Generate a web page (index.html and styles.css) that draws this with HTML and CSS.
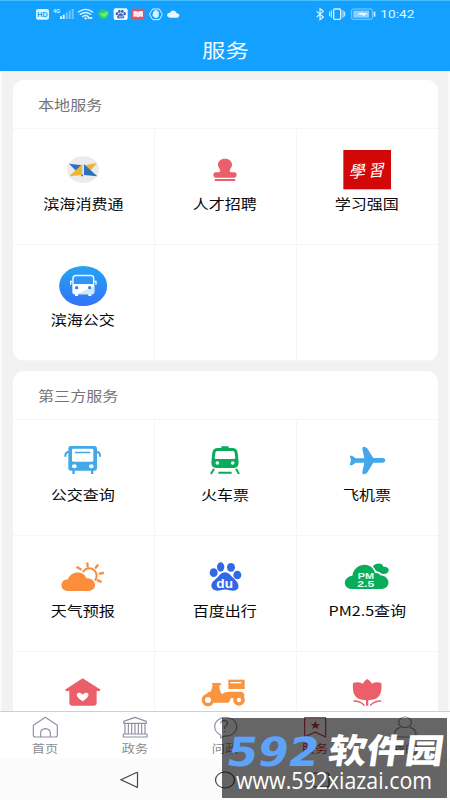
FILE: index.html
```html
<!DOCTYPE html>
<html lang="zh-CN">
<head>
<meta charset="utf-8">
<title>服务</title>
<link rel="stylesheet" href="styles.css">
</head>
<body>
<div class="phone">
  <header class="header">
    <div class="status">
      <svg class="status-left" viewBox="105 18 438 48">
        <rect x="108" y="27" width="39" height="32" rx="6" fill="#d8f4ff"/>
        <text x="112" y="51" class="hd" textLength="31" lengthAdjust="spacingAndGlyphs">HD</text>
        <text x="159" y="40" class="g4" textLength="22" lengthAdjust="spacingAndGlyphs">4G</text>
        <g fill="#d8f4ff"><rect x="180" y="49" width="6" height="8"/><rect x="188" y="44" width="6" height="13"/></g>
        <g fill="#72c4ff"><rect x="197" y="38" width="6" height="19"/><rect x="206" y="32" width="6" height="25"/><rect x="215" y="27" width="6" height="30"/></g>
        <g fill="none" stroke="#d8f4ff" stroke-width="4" stroke-linecap="round"><path d="M235 36Q257 20 278 36M241 43Q257 32 272 43M248 50Q257 43 265 50"/></g>
        <circle cx="257" cy="55" r="3.5" fill="#d8f4ff"/><path d="M263 51h14v6h-14z" fill="#c0e8ff"/>
        <ellipse cx="310" cy="43" rx="16" ry="15" fill="#22c98a"/><path d="M300 41q5-6 10-1 8-8 15-5-2 12-13 17-9-2-12-11z" fill="#70ea6a"/>
        <rect x="341" y="25" width="42" height="35" rx="6" fill="#f5fbff"/>
        <g fill="#3c62c4"><ellipse cx="351" cy="41" rx="4" ry="5"/><ellipse cx="358" cy="34" rx="4" ry="5"/><ellipse cx="367" cy="34" rx="4" ry="5"/><ellipse cx="374" cy="41" rx="4" ry="5"/><path d="M362 40c6 0 6 5 10 9 3 6-2 8-10 6-8 2-13 0-10-6 4-4 4-9 10-9z"/></g>
        <path d="M358 47v5h3v-5M365 47v5h4v-5" stroke="#fff" fill="none" stroke-width="1.5"/>
        <rect x="396" y="26" width="37" height="34" rx="5" fill="#e74f66"/><path d="M400 34q7-3 14 1 8-4 15-1v17q-7-3-15 1-7-4-14-1z" fill="#ffe9e8"/>
        <path d="M458 27h20l9 16-9 16h-20l-10-16z" fill="none" stroke="#d8f4ff" stroke-width="3"/>
        <path d="M455 42l4 2v-9h4v-4h9v3h4v13q-1 7-8 7-6 0-13-12z" fill="#d8f4ff"/>
        <path d="M510 53q-9-1-9-8 1-7 9-7 4-8 13-6 6 2 7 8 8 0 8 7-1 6-9 6z" fill="#e8f7ff"/>
      </svg>
      <svg class="status-right" viewBox="270 18 309 48">
        <path d="M275 34l20 17-10 8V26l10 8-20 17" fill="none" stroke="#d8f4ff" stroke-width="3.500"/>
        <rect x="326" y="27" width="21" height="31" rx="3" fill="none" stroke="#d8f4ff" stroke-width="4"/>
        <path d="M319 31v22M314 35v14M354 31v22M359 35v14" stroke="#d8f4ff" stroke-width="3"/>
        <rect x="380" y="27" width="62" height="31" rx="4" fill="none" stroke="#84ccff" stroke-width="3"/><rect x="385" y="32" width="47" height="21" fill="#8fd0ff"/>
        <path d="M397 43l14-6v3h18l-15 8v-4z" fill="#fff"/><rect x="446" y="35" width="5" height="15" fill="#d8f4ff"/>
        <text x="466" y="54" class="clock" textLength="102" lengthAdjust="spacingAndGlyphs">10:42</text>
      </svg>
    </div>
    <h1 class="title"><span class="wide">服务</span></h1>
  </header>

  <main class="content">
    <section class="card">
      <h2 class="card-title"><span class="wide-left">本地服务</span></h2>
      <div class="grid">
        <div class="cell">
          <svg class="icon" viewBox="161 219 180 132">
            <ellipse cx="251" cy="284" rx="48" ry="40" fill="#ebebeb"/>
            <path d="M209 266l39 5-15 19z" fill="#2d6fbd"/><path d="M293 264l-37 7 13 21z" fill="#efb52f"/>
            <path d="M210 304l38-36v32z" fill="#efb52f"/><path d="M254 268v32l40 4z" fill="#2d6fbd"/>
            <path d="M248 266h5v37h-5z" fill="#cfe0ef"/><path d="M246 299h5v5h-5z" fill="#2d6fbd"/>
          </svg>
          <span class="label wide">滨海消费通</span>
        </div>
        <div class="cell">
          <svg class="icon" viewBox="586 219 180 132" fill="#ea5f69">
            <path d="M676 251c13 0 21 8 21 18 0 8-6 11-7 19q0 4 6 4h9q6 1 6 8t-6 8h-58q-6-1-6-8t6-8h9q6 0 6-4c-1-8-7-11-7-19 0-10 8-18 21-18z"/><rect x="645" y="312" width="62" height="6" rx="2"/>
          </svg>
          <span class="label wide">人才招聘</span>
        </div>
        <div class="cell">
          <svg class="icon" viewBox="336 219 180 132">
            <rect x="355" y="225" width="143" height="118" fill="#d20808"/>
            <g transform="translate(371 309) skewX(-14) rotate(-4)"><text class="brush" x="0" y="0" textLength="48" lengthAdjust="spacingAndGlyphs">學</text><text class="brush" x="58" y="0" textLength="46" lengthAdjust="spacingAndGlyphs">習</text></g>
          </svg>
          <span class="label wide">学习强国</span>
        </div>
        <div class="cell">
          <svg class="icon" viewBox="161 117 180 132">
            <defs><linearGradient id="sky" x1="0" y1="0" x2="0" y2="1"><stop offset="0" stop-color="#25a3f2"/><stop offset="1" stop-color="#3273fa"/></linearGradient></defs>
            <ellipse cx="251.500" cy="183" rx="72" ry="60" fill="url(#sky)"/>
            <path d="M230 149h44q11 0 11 11v40q0 8-8 8h-1v5h-9v-5h-31v5h-9v-5h-1q-7 0-7-8v-40q0-11 11-11z" fill="#fff"/>
            <path d="M229 154h46q6 0 6 6v17h-58v-17q0-6 6-6z" fill="#2f96f8"/>
            <path d="M285 184v18q0 6-8 6h-44z" fill="#d4e7fd"/>
            <circle cx="232" cy="188" r="5" fill="#2f83f8"/><circle cx="271" cy="188" r="5" fill="#2f83f8"/>
            <path d="M219 169h-5v10M285 169h5v10" fill="none" stroke="#fff" stroke-width="4"/>
          </svg>
          <span class="label wide">滨海公交</span>
        </div>
        <div class="cell"></div>
        <div class="cell"></div>
      </div>
    </section>

    <section class="card">
      <h2 class="card-title"><span class="wide-left">第三方服务</span></h2>
      <div class="grid">
        <div class="cell">
          <svg class="icon" viewBox="161 72 180 132">
            <path d="M214 93h71q8 0 8 8v58q0 8-8 8h-3v10h-7v-10h-49v10h-7v-10h-4q-8 0-8-8v-58q0-8 7-8z" fill="#43a7e8"/>
            <rect x="218" y="101" width="64" height="39" rx="4" fill="#fff"/><rect x="227" y="110" width="46" height="5" rx="2" fill="#43a7e8"/>
            <ellipse cx="225" cy="154" rx="7" ry="6" fill="#fff"/><ellipse cx="276" cy="154" rx="7" ry="6" fill="#fff"/>
            <path d="M208 111q-10 0-10 12M292 111q10 0 10 12" fill="none" stroke="#43a7e8" stroke-width="6" stroke-linecap="round"/>
          </svg>
          <span class="label wide">公交查询</span>
        </div>
        <div class="cell">
          <svg class="icon" viewBox="586 72 180 132">
            <path d="M665 94h22v5h11q14 0 16 14l3 29q0 17-14 17h-54q-14 0-14-17l3-29q2-14 16-14h11z" fill="#0aac5b"/>
            <path d="M653 108h46q6 0 6 6l2 14q0 4-5 4h-52q-5 0-5-4l2-14q0-6 6-6z" fill="#fff"/>
            <circle cx="653" cy="144" r="5.500" fill="#fff"/><circle cx="699" cy="144" r="5.500" fill="#fff"/>
            <path d="M643 161l-9 16M709 161l9 16M656 173h40" fill="none" stroke="#0aac5b" stroke-width="6"/>
          </svg>
          <span class="label wide">火车票</span>
        </div>
        <div class="cell">
          <svg class="icon" viewBox="336 72 180 132">
            <path d="M374 122h7l11 8h26l-6-29q0-7 6-6l8 4 19 30h29q7 1 7 7t-7 7h-29l-19 31-8 4q-7 0-6-7l6-28h-26l-11 8h-7l4-15z" fill="#43a7e8"/>
          </svg>
          <span class="label wide">飞机票</span>
        </div>
        <div class="cell">
          <svg class="icon" viewBox="161 60 180 132">
            <circle cx="270" cy="122" r="22" fill="none" stroke="#fb8d3c" stroke-width="6"/>
            <path d="M264 85l1 9M295 91l-6 7M311 114l-10 2M304 140l-9-4M234 97l10 6" fill="none" stroke="#fb8d3c" stroke-width="7" stroke-linecap="round"/>
            <path d="M205 168c-26-1-24-35 1-35 8-27 48-27 55-3 29-2 37 34 8 38z" fill="#fb8d3c" stroke="#fff" stroke-width="9" paint-order="stroke"/>
          </svg>
          <span class="label wide">天气预报</span>
        </div>
        <div class="cell">
          <svg class="icon" viewBox="586 60 180 132" fill="#3168e8">
            <ellipse cx="642" cy="113" rx="12" ry="13"/><ellipse cx="663" cy="96" rx="11" ry="14"/><ellipse cx="694" cy="97" rx="12" ry="13"/><ellipse cx="713" cy="120" rx="12" ry="13"/>
            <path d="M676 112c13 0 18 12 28 20 24 21 11 41-14 34-10-3-18-3-28 0-28 6-35-18-17-31 14-11 17-23 31-23z"/>
            <text x="650" y="158" class="du" textLength="50" lengthAdjust="spacingAndGlyphs">du</text>
          </svg>
          <span class="label wide">百度出行</span>
        </div>
        <div class="cell">
          <svg class="icon" viewBox="336 60 180 132">
            <path d="M443 95c9-14 30-12 32 0 24-1 19 22 1 22q-20-2-33-22z" fill="#0aac5b"/>
            <path d="M383 162c-31 0-31-36-1-40 7-41 60-43 68-8 9-1 15 3 16 7 32 3 32 40 4 41z" fill="#0aac5b" stroke="#fff" stroke-width="8" paint-order="stroke"/>
            <text x="398" y="131" class="pm" textLength="49" lengthAdjust="spacingAndGlyphs">PM</text><text x="397" y="156" class="pm" textLength="51" lengthAdjust="spacingAndGlyphs">2.5</text>
          </svg>
          <span class="label wide">PM2.5查询</span>
        </div>
        <div class="cell">
          <svg class="icon" viewBox="161 93 180 132">
            <path d="M250 115l54 34q-2 7-12 3v36q0 9-9 9h-64q-9 0-9-9v-36q-10 4-13-3z" fill="#ea5f69"/>
            <path d="M250 184c-32-19-13-34 0-20 13-14 32 1 0 20z" fill="#fff"/>
          </svg>
        </div>
        <div class="cell">
          <svg class="icon" viewBox="-59 93 180 132">
            <g fill="#f9943f"><path d="M-7 129h24q5 2 1 7h-4q0 17 8 27 7-7 18-8h38q9 1 11 8l-1 12H48q-2 13-9 13H-2q0-23-25-25 9-8 16-9l5-17q-4-4-1-8z"/><path d="M41 119h49v28H41z"/></g>
            <circle cx="-20" cy="180" r="14" fill="#fff" stroke="#f9943f" stroke-width="10"/><circle cx="73" cy="180" r="12" fill="#fff" stroke="#f9943f" stroke-width="11"/>
            <path d="M47 128h33" stroke="#fff" stroke-width="4"/>
          </svg>
        </div>
        <div class="cell">
          <svg class="icon" viewBox="366 93 180 132">
            <path d="M457 117q9 5 14 14 12-7 28-2c3 35-7 50-39 52v16h-7v-16c-32-2-42-17-39-52q16-5 29 2 5-9 14-14z" fill="#ea5f69"/>
            <path d="M417 183q18 0 30 12M497 183q-18 0-30 12" fill="none" stroke="#ea5f69" stroke-width="5" stroke-linecap="round"/>
          </svg>
        </div>
      </div>
    </section>
  </main>

  <nav class="tabs">
    <div class="tab">
      <svg viewBox="90 222 90 75"><path d="M136 232l36 24v29q0 6-6 6h-15v-14q-2-10-15-11-13 1-14 11v14h-16q-6 0-6-6v-29zM122 291h29"/></svg>
      <span class="wide">首页</span>
    </div>
    <div class="tab">
      <svg viewBox="360 222 90 75"><path d="M405 232l34 12v6h-68v-6zM375 251v31M385 251v31M395 251v31M405 251v31M415 251v31M425 251v31M435 251v31M370 282h71v9h-71z"/></svg>
      <span class="wide">政务</span>
    </div>
    <div class="tab">
      <svg viewBox="-12 222 90 75"><path d="M20 285a33 28 0 1 1 12 3l-12 6z"/><path d="M20 250q1-9 11-9 9 1 10 9 0 6-9 10v7M32 273v3"/></svg>
      <span class="wide">问政</span>
    </div>
    <div class="tab active">
      <svg viewBox="255 222 90 75"><path d="M269 233h63v58l-31-15-32 15z"/><path class="star" d="M301 243l4 9h10l-8 6 3 9-9-5-9 5 3-9-8-6h10z"/></svg>
      <span class="wide">服务</span>
    </div>
    <div class="tab">
      <svg viewBox="525 222 90 75"><ellipse cx="570" cy="247" rx="19" ry="16"/><path d="M557 262q-18 5-18 19 0 10 10 10h42q12 0 12-10 0-14-19-19"/></svg>
      <span class="wide">我的</span>
    </div>
  </nav>
  <div class="system-nav">
    <svg viewBox="0 0 24 24"><path d="M4 11.800L19.500 4.500Q20.500 4 20.500 5.500v13Q20.500 20 19.500 19z"/></svg>
    <svg viewBox="0 0 24 24"><ellipse cx="12" cy="12" rx="9.500" ry="8"/></svg>
    <svg viewBox="0 0 24 24"><rect x="4" y="5" width="16" height="14" rx="2"/></svg>
  </div>

  <svg class="watermark" viewBox="0 0 225 80">
    <g transform="translate(3 48) skewX(-10)"><text class="wm-number" x="0" y="0" textLength="92" lengthAdjust="spacingAndGlyphs">592</text></g>
    <g transform="translate(105 45) skewX(-8)"><text class="wm-name" x="0" y="0" textLength="115" lengthAdjust="spacingAndGlyphs">软件园</text></g>
    <text class="wm-url" x="14" y="71" textLength="196" lengthAdjust="spacingAndGlyphs">www.592xiazai.com</text>
  </svg>
</div>
</body>
</html>
```
FILE: styles.css
```css
* { box-sizing: border-box; }
body { margin: 0; font-family: "Noto Sans CJK SC", sans-serif; }
.phone {
  position: relative;
  display: flex;
  flex-direction: column;
  width: 450px;
  height: 800px;
  overflow: hidden;
  background: #f2f2f2;
}
.wide { display: inline-block; transform: scaleX(1.2); white-space: nowrap; }
.wide-left { display: inline-block; transform: scaleX(1.2); transform-origin: left; }

.header {
  flex: 0 0 71px;
  background: #14a0ff;
  border-top: 1px solid #45bfff;
}
.status { display: flex; justify-content: space-between; padding: 5px 32px 0 35px; height: 28px; }
.status-left { width: 146px; height: 16px; }
.status-right { width: 103px; height: 16px; }
.hd { font: bold 22px "Liberation Sans", sans-serif; fill: #14a0ff; }
.g4 { font: bold 18px "Liberation Sans", sans-serif; fill: #d8f4ff; }
.clock { font: 33px Roboto, sans-serif; fill: #e0f6ff; }
.title {
  margin: 0;
  padding-left: 1px;
  text-align: center;
  font-size: 19.5px;
  font-weight: 400;
  line-height: 41px;
  color: #eefaff;
}

.content {
  flex: 0 0 640px;
  display: flex;
  flex-direction: column;
  gap: 10px;
  padding: 9px 10px 0 11px;
  overflow: hidden;
  border-left: 2px solid #fafafa;
  border-right: 2px solid #fafafa;
}
.card { flex: none; background: #fff; border-radius: 11px; overflow: hidden; }
.card-title {
  margin: 0;
  height: 49px;
  padding-left: 25px;
  border-bottom: 1px solid #f6f6f6;
  font-size: 13.4px;
  font-weight: 400;
  line-height: 48px;
  color: #747474;
}
.grid { display: grid; grid-template-columns: 142px 142px 1fr; grid-auto-rows: 116px; }
.cell {
  display: flex;
  flex-direction: column;
  align-items: center;
  padding: 19px 1px 0 0;
  border-right: 1px solid #f6f6f6;
  border-bottom: 1px solid #f6f6f6;
}
.cell:nth-child(3n) { border-right: 0; }
.icon { flex: none; width: 60px; height: 44px; }
.label { font-size: 13.4px; line-height: 22px; color: #080808; }
.brush { font: 400 50px "Noto Sans CJK TC", sans-serif; fill: #fff; }
.du { font: bold 36px "Liberation Sans", sans-serif; fill: #fff; }
.pm { font: bold 26px "Liberation Sans", sans-serif; fill: #e2fff0; }

.tabs {
  flex: 0 0 48px;
  display: grid;
  grid-template-columns: repeat(5, 90px);
  background: #fff;
  border-top: 1px solid #cfcfcf;
}
.tab {
  display: flex;
  flex-direction: column;
  align-items: center;
  padding-top: 2px;
  font-size: 11px;
  line-height: 18px;
  color: #8c8c90;
}
.tab svg { width: 30px; height: 25px; fill: none; stroke: #8f90a3; stroke-width: 3.5; stroke-linejoin: round; }
.tab.active { color: #d8343c; }
.tab.active svg { stroke: #d8343c; }
.tab .star { fill: #d8343c; stroke: none; }
.system-nav {
  flex: 1;
  display: flex;
  justify-content: center;
  align-items: center;
  gap: 72px;
  background: #fbfbfb;
}
.system-nav svg { width: 24px; height: 24px; fill: none; stroke: #444; stroke-width: 1.2; }

.watermark {
  position: absolute;
  left: 222px;
  top: 718px;
  width: 225px;
  height: 80px;
  background: rgba(0, 0, 0, 0.6);
}
.wm-number { font: bold 40px "DejaVu Sans", sans-serif; fill: #5ea3fb; }
.wm-name { font: 900 34px "Noto Sans CJK SC", sans-serif; fill: #fff; }
.wm-url { font: 500 23px "Open Sans", sans-serif; fill: #fff; }
```
